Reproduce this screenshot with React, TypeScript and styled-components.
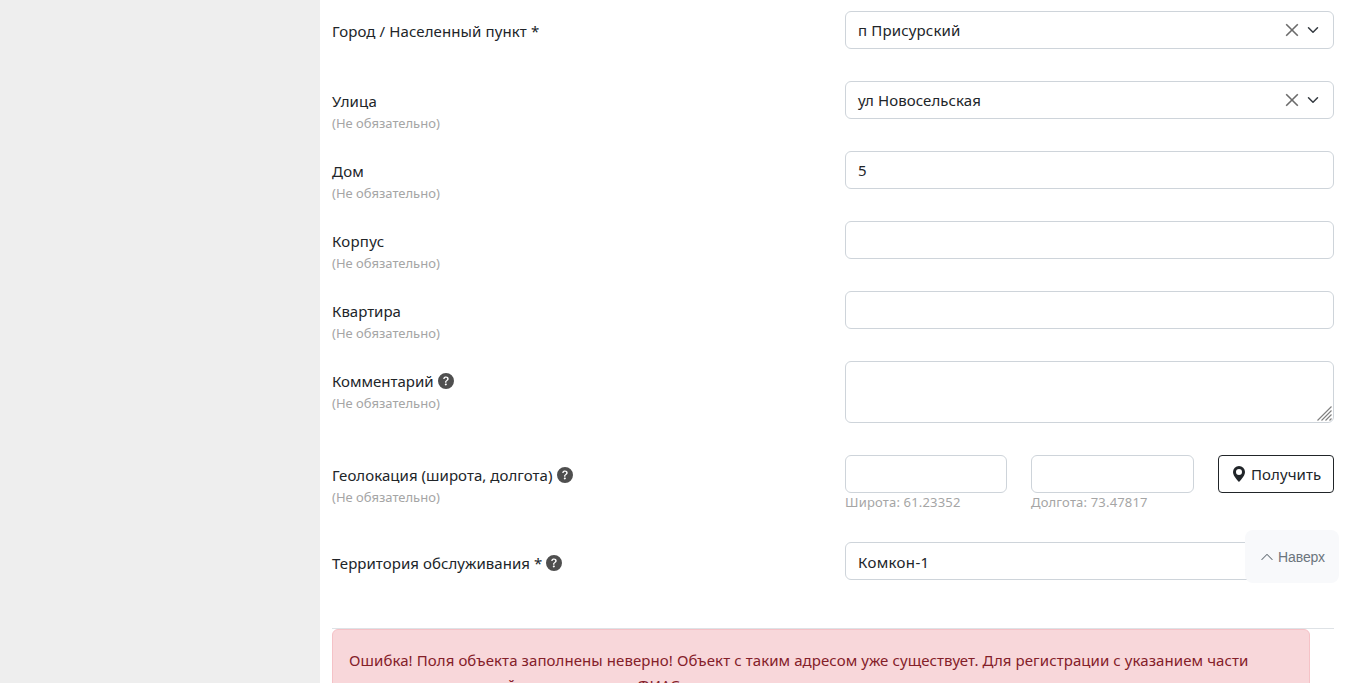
import React from "react";
import styled, { createGlobalStyle } from "styled-components";

const GlobalStyle = createGlobalStyle`
  *, *::before, *::after { box-sizing: border-box; }
  html, body { margin: 0; height: 100%; overflow: hidden; }
  body {
    background: #fff;
    color: #212529;
    font: 15px/24px "Segoe UI", "Noto Sans", sans-serif;
  }
`;

const Page = styled.div`
  display: flex;
  height: 683px;
  overflow: hidden;
`;
const Sidebar = styled.aside`
  width: 320px;
  flex: none;
  background: #eee;
`;
const Main = styled.main`
  flex: 1;
  min-width: 0;
  padding: 11px 32px 0 12px;
`;
const Row = styled.div<{ $h: number }>`
  display: grid;
  grid-template-columns: 513px 489px;
  height: ${(p) => p.$h}px;
`;
const LabelCell = styled.div<{ $top: number }>`
  padding-top: ${(p) => p.$top}px;
`;
const Text = styled.span<{ $ls?: number }>`
  letter-spacing: ${(p) => p.$ls ?? 0.08}px;
  white-space: nowrap;
`;
const Label = styled.div`
  display: flex;
  align-items: center;
  gap: 4px;
  height: 24px;
`;
const Muted = styled.div<{ $ls?: number }>`
  color: #a5a5a5;
  font-size: 13px;
  line-height: 20px;
  letter-spacing: ${(p) => p.$ls ?? 0}px;
  white-space: nowrap;
`;
const Hint = styled(Muted)`
  line-height: 18px;
`;
const Field = styled.div<{ $h?: number; $drop?: number }>`
  display: flex;
  align-items: center;
  height: ${(p) => p.$h ?? 38}px;
  padding: ${(p) => p.$drop ?? 0}px 12px 0;
  border: 1px solid #ced4da;
  border-radius: 6px;
  background: #fff;
`;
const Tools = styled.div`
  display: flex;
  align-items: center;
  gap: 8px;
  margin-left: auto;
  margin-right: 2px;
`;
const Area = styled(Field)`
  align-items: flex-end;
  justify-content: flex-end;
  padding: 0 1px 1px 0;
`;
const Geo = styled.div`
  display: grid;
  grid-template-columns: 162px 163px 116px;
  column-gap: 24px;
  align-items: start;
`;
const GetButton = styled.button`
  display: flex;
  align-items: center;
  gap: 4px;
  height: 38px;
  padding: 0 0 0 12px;
  border: 1px solid #212529;
  border-radius: 4px;
  background: #fff;
  color: #212529;
  font: inherit;
`;
const ErrorSection = styled.section`
  border-top: 1px solid #dee2e6;
`;
const Alert = styled.div`
  width: 978px;
  height: 120px;
  padding: 18px 16px;
  border: 1px solid #f5c2c7;
  border-radius: 6px;
  background: #f8d7da;
  color: #842029;
`;
const AlertLine = styled.div<{ $ls: number }>`
  letter-spacing: ${(p) => p.$ls}px;
  white-space: nowrap;
  & + & { margin-top: 1px; }
`;
const UpButton = styled.button`
  position: fixed;
  left: 1245px;
  top: 530px;
  width: 94px;
  height: 53px;
  display: flex;
  align-items: center;
  gap: 4px;
  padding: 0 0 0 15px;
  border: 0;
  border-radius: 8px;
  background: #f8f9fb;
  color: #6c757d;
  font: 14px/20px "Liberation Sans", Arial, sans-serif;
  letter-spacing: -0.1px;
`;

const Help = () => (
  <svg width="16" height="16" viewBox="0 0 16 16" fill="#4f4f4f">
    <path d="M16 8A8 8 0 1 1 0 8a8 8 0 0 1 16 0M5.496 6.033h.825c.138 0 .248-.113.266-.25.09-.656.54-1.134 1.342-1.134.686 0 1.314.343 1.314 1.168 0 .635-.374.927-.965 1.371-.673.489-1.206 1.06-1.168 1.987l.003.217a.25.25 0 0 0 .25.246h.811a.25.25 0 0 0 .25-.25v-.105c0-.718.273-.927 1.01-1.486.609-.463 1.244-.977 1.244-2.056 0-1.511-1.276-2.241-2.673-2.241-1.267 0-2.655.59-2.75 2.286a.237.237 0 0 0 .241.247m2.325 6.443c.61 0 1.029-.394 1.029-.927 0-.552-.42-.94-1.029-.94-.584 0-1.009.388-1.009.94 0 .533.425.927 1.01.927z" />
  </svg>
);
const Pin = () => (
  <svg width="16" height="16" viewBox="0 0 16 16" fill="#212529">
    <path d="M8 16s6-5.686 6-10A6 6 0 0 0 2 6c0 4.314 6 10 6 10m0-7a3 3 0 1 1 0-6 3 3 0 0 1 0 6" />
  </svg>
);
const Clear = () => (
  <svg width="14" height="14" viewBox="0 0 14 14" stroke="#6b6b6b" strokeWidth="1.6" fill="none">
    <path d="M1.2 1.2 12.8 12.8M12.8 1.2 1.2 12.8" />
  </svg>
);
const Chevron = () => (
  <svg width="12" height="12" viewBox="0 0 16 16" fill="none" stroke="#343a40" strokeWidth="2" strokeLinecap="round" strokeLinejoin="round">
    <path d="m2 5 6 6 6-6" />
  </svg>
);
const Up = () => (
  <svg width="14" height="14" viewBox="0 0 16 16" fill="#6c757d">
    <path d="M7.646 4.646a.5.5 0 0 1 .708 0l6 6a.5.5 0 0 1-.708.708L8 5.707l-5.646 5.647a.5.5 0 0 1-.708-.708z" />
  </svg>
);
const Grip = () => (
  <svg width="15" height="15" viewBox="0 0 15 15" stroke="#808080" strokeWidth="1.2" fill="none">
    <path d="M.5 14.5 14.5.5M4.5 14.5l10-10M8.5 14.5l6-6M12.5 14.5l2-2" />
  </svg>
);

type FormRowProps = {
  label: string;
  ls?: number;
  h?: number;
  top?: number;
  optional?: boolean;
  help?: boolean;
  children: React.ReactNode;
};
const FormRow = ({ label, ls, h = 70, top = 8, optional, help, children }: FormRowProps) => (
  <Row $h={h}>
    <LabelCell $top={top}>
      <Label>
        <Text $ls={ls}>{label}</Text>
        {help && <Help />}
      </Label>
      {optional && <Muted>(Не обязательно)</Muted>}
    </LabelCell>
    <div>{children}</div>
  </Row>
);
const Select = ({ value, ls }: { value: string; ls?: number }) => (
  <Field>
    <Text $ls={ls}>{value}</Text>
    <Tools>
      <Clear />
      <Chevron />
    </Tools>
  </Field>
);

export default function App() {
  return (
    <Page>
      <GlobalStyle />
      <Sidebar />
      <Main>
        <FormRow label="Город / Населенный пункт *" ls={0.11}>
          <Select value="п Присурский" ls={0.16} />
        </FormRow>
        <FormRow label="Улица" ls={0.15} optional>
          <Select value="ул Новосельская" ls={0.1} />
        </FormRow>
        <FormRow label="Дом" ls={0.2} optional>
          <Field><Text>5</Text></Field>
        </FormRow>
        <FormRow label="Корпус" ls={0.25} optional>
          <Field />
        </FormRow>
        <FormRow label="Квартира" ls={0} optional>
          <Field />
        </FormRow>
        <FormRow label="Комментарий" ls={0} optional help h={94}>
          <Area $h={62}><Grip /></Area>
        </FormRow>
        <FormRow label="Геолокация (широта, долгота)" ls={0.05} optional help h={87}>
          <Geo>
            <div>
              <Field />
              <Hint $ls={0.18}>Широта: 61.23352</Hint>
            </div>
            <div>
              <Field />
              <Hint $ls={0.18}>Долгота: 73.47817</Hint>
            </div>
            <GetButton><Pin /><Text>Получить</Text></GetButton>
          </Geo>
        </FormRow>
        <FormRow label="Территория обслуживания *" ls={0.06} help h={86} top={9}>
          <Field $drop={2}><Text $ls={0.35}>Комкон-1</Text></Field>
        </FormRow>
        <ErrorSection>
          <Alert>
            <AlertLine $ls={0.083}>Ошибка! Поля объекта заполнены неверно! Объект с таким адресом уже существует. Для регистрации с указанием части</AlertLine>
            <AlertLine $ls={0.08}>помещения, у которой отсутствует код ФИАС</AlertLine>
          </Alert>
        </ErrorSection>
      </Main>
      <UpButton><Up />Наверх</UpButton>
    </Page>
  );
}
